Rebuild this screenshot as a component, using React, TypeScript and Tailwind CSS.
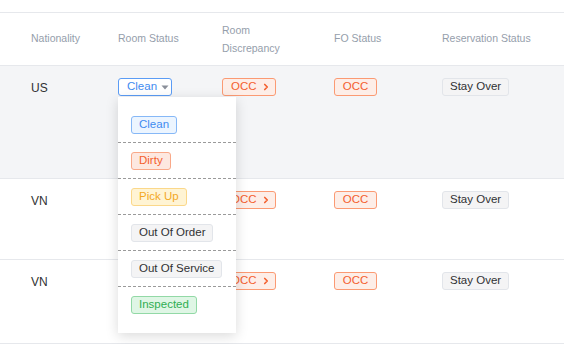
import { ChevronRight } from 'lucide-react'

const font = { fontFamily: '"Liberation Sans", Arial, sans-serif' }

const options = [
  { label: 'Clean', cls: 'bg-[#ecf5ff] border-[#86b8f7] text-[#3f8cf0]' },
  { label: 'Dirty', cls: 'bg-[#fde8e0] border-[#f9a888] text-[#f4602e]' },
  { label: 'Pick Up', cls: 'bg-[#fff4d4] border-[#fbd88a] text-[#f3a81f]' },
  { label: 'Out Of Order', cls: 'bg-[#f4f4f5] border-[#e2e5ea] text-[#303133]' },
  { label: 'Out Of Service', cls: 'bg-[#f4f4f5] border-[#e2e5ea] text-[#303133]' },
  { label: 'Inspected', cls: 'bg-[#dff6e5] border-[#92d9a6] text-[#2fae52]' },
]

const rows = [
  { nat: 'US', h: 'h-[113px]', bg: 'bg-[#f4f5f7]' },
  { nat: 'VN', h: 'h-[81px]', bg: 'bg-white' },
  { nat: 'VN', h: 'h-[84px]', bg: 'bg-white' },
]

function Tag({ children, className }: { children: React.ReactNode; className: string }) {
  return (
    <span className={`inline-flex h-[18px] items-center whitespace-nowrap rounded-[3px] border px-[7px] text-[11.5px] leading-none ${className}`}>
      {children}
    </span>
  )
}

function StatusTrigger() {
  return (
    <span className="inline-flex h-[18px] w-[54px] items-center gap-[4px] whitespace-nowrap rounded-[3px] border border-[#5b9cf5] bg-white pl-[8px] text-[11.5px] leading-none text-[#3f8cf0]">
      Clean
      <svg width="8" height="5" viewBox="0 0 8 5" className="mt-[1px]">
        <path d="M0.5 0.5h7L4 4.5z" fill="#8a8f99" />
      </svg>
    </span>
  )
}

function OccLink() {
  return (
    <span className="inline-flex h-[18px] w-[54px] items-center gap-[4px] whitespace-nowrap rounded-[3px] border border-[#fb9a73] bg-[#fdeee8] pl-[8px] text-[11.5px] leading-none text-[#f4602e]">
      OCC
      <ChevronRight size={10} strokeWidth={4} />
    </span>
  )
}

export default function App() {
  return (
    <div className="relative h-[344px] w-[564px] overflow-hidden bg-white" style={font}>
      <div className="h-[12px]" />
      <div className="grid h-[54px] grid-cols-[118px_104px_112px_108px_1fr] items-center border-y border-[#e6e8ec] text-[10.5px] text-[#959eab]">
        <div className="pl-[31px]">Nationality</div>
        <div>Room Status</div>
        <div className="leading-[18px]">Room<br />Discrepancy</div>
        <div>FO Status</div>
        <div>Reservation Status</div>
      </div>

      {rows.map((r, i) => (
        <div
          key={i}
          className={`grid grid-cols-[118px_104px_112px_108px_1fr] items-start border-b border-[#e6e8ec] pt-[12px] text-[11px] text-[#303133] ${r.h} ${r.bg}`}
        >
          <div className="pl-[31px] pt-[1px] text-[12px]">{r.nat}</div>
          <div><StatusTrigger /></div>
          <div><OccLink /></div>
          <div>
            <Tag className="w-[43px] justify-center border-[#fb9a73] bg-[#fdeee8] text-[#f4602e]">OCC</Tag>
          </div>
          <div>
            <Tag className="border-[#e2e5ea] bg-[#f4f4f5] text-[#303133]">Stay Over</Tag>
          </div>
        </div>
      ))}

      <div className="absolute left-[118px] top-[97px] w-[118px] bg-white py-[10px] shadow-[0_3px_12px_rgba(0,0,0,0.15)]">
        {options.map((o, i) => (
          <div
            key={o.label}
            className={`flex h-[36px] items-center pl-[13px] ${i < options.length - 1 ? 'border-b border-dashed border-[#9a9a9a]' : ''}`}
          >
            <Tag className={o.cls}>{o.label}</Tag>
          </div>
        ))}
      </div>
    </div>
  )
}
